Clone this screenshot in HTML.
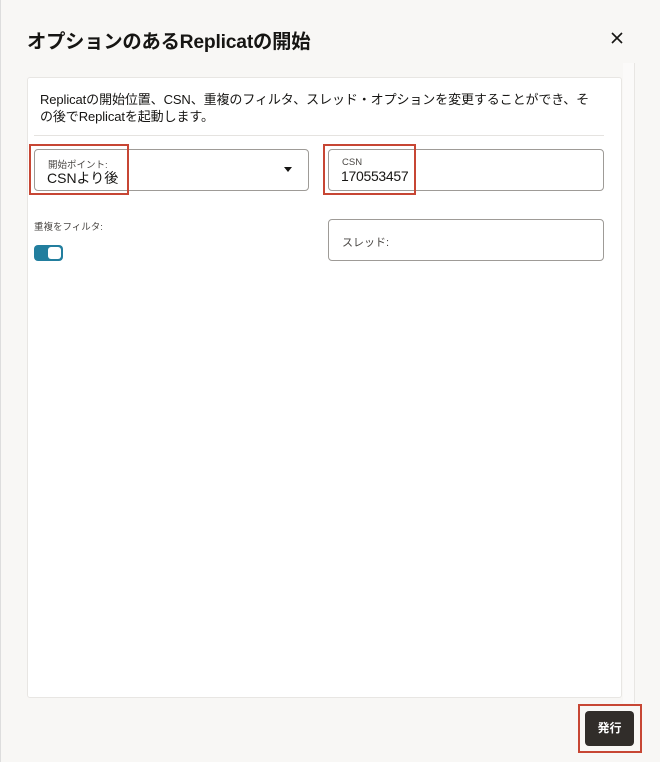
<!DOCTYPE html>
<html><head><meta charset="utf-8"><style>
*{box-sizing:border-box;margin:0;padding:0}
body{width:660px;height:762px;background:#f8f7f5;font-family:"Liberation Sans","Noto Sans CJK JP",sans-serif;color:#161513;position:relative;overflow:hidden}
.a{position:absolute}
.title{left:27px;top:26px;font-size:19.3px;font-weight:bold;letter-spacing:-0.2px}
.panel{left:27px;top:77px;width:595px;height:621px;background:#fff;border:1px solid #e8e6e3;border-radius:3px}
.desc{left:40px;top:91px;font-size:13px;line-height:17px;white-space:nowrap;letter-spacing:-0.1px}
.hr{left:34px;top:135px;width:570px;height:1px;background:#e5e3e0}
.fld{border:1px solid #9e9b97;border-radius:4px;background:#fff}
.lab{font-size:9.5px;color:#4a4744}
.val{font-size:14px}
.red{border:2.5px solid #c74634}
</style></head><body>
<div class="a" style="left:0;top:0;width:1px;height:762px;background:#ddd"></div>
<div class="a title">オプションのあるReplicatの開始</div>
<svg class="a" style="left:611px;top:32px" width="12" height="12" viewBox="0 0 12 12"><path d="M1 1L11 11M11 1L1 11" stroke="#161513" stroke-width="1.6"/></svg>
<div class="a" style="left:623px;top:63px;width:12px;height:640px;border-right:1px solid #e8e6e3;background:#fbfaf9"></div>
<div class="a panel"></div>
<div class="a desc">Replicatの開始位置、CSN、重複のフィルタ、スレッド・オプションを変更することができ、そ<br>の後でReplicatを起動します。</div>
<div class="a hr"></div>
<div class="a fld" style="left:34px;top:149px;width:275px;height:42px"></div>
<div class="a lab" style="left:48px;top:157px">開始ポイント:</div>
<div class="a val" style="left:47px;top:168px">CSNより後</div>
<div class="a" style="left:284px;top:167px;width:0;height:0;border-left:4px solid transparent;border-right:4px solid transparent;border-top:5px solid #161513"></div>
<div class="a red" style="left:29px;top:144px;width:100px;height:51px"></div>
<div class="a fld" style="left:328px;top:149px;width:276px;height:42px"></div>
<div class="a lab" style="left:342px;top:157px">CSN</div>
<div class="a val" style="left:341px;top:168px;letter-spacing:-0.3px">170553457</div>
<div class="a red" style="left:323px;top:144px;width:93px;height:51px"></div>
<div class="a lab" style="left:34px;top:219px">重複をフィルタ:</div>
<div class="a" style="left:34px;top:245px;width:29px;height:16px;border-radius:4px;background:#227e9e"></div>
<div class="a" style="left:48px;top:247px;width:13px;height:12px;border-radius:3px;background:#fff"></div>
<div class="a fld" style="left:328px;top:219px;width:276px;height:42px"></div>
<div class="a" style="left:342px;top:234px;font-size:11px;color:#4a4744">スレッド:</div>
<div class="a" style="left:585px;top:711px;width:49px;height:35px;background:#312d2a;border-radius:4px;color:#fff;font-size:12px;font-weight:bold;text-align:center;line-height:35px">発行</div>
<div class="a red" style="left:578px;top:704px;width:64px;height:49px"></div>
</body></html>
